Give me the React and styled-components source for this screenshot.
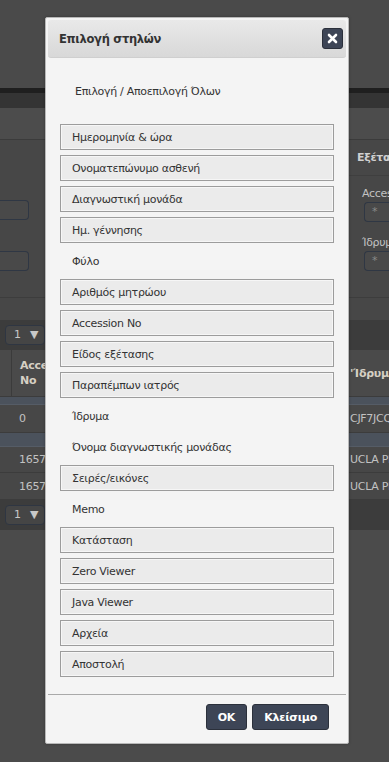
import React from "react";
import styled, { createGlobalStyle } from "styled-components";

const GlobalStyle = createGlobalStyle`
  html, body {
    margin: 0;
    padding: 0;
  }
  body {
    font-family: "DejaVu Sans", Verdana, sans-serif;
    background: #4b4b4b;
  }
`;

const Page = styled.div`
  position: relative;
  width: 389px;
  height: 762px;
  overflow: hidden;
  background: #4b4b4b;
  color: #c2c2c2;
  font-size: 11px;
  letter-spacing: -0.3px;
`;

const TopArea = styled.div`
  height: 88px;
  background: #4a4a4a;
`;

const Strip = styled.div`
  height: ${p => p.h}px;
  background: ${p => p.bg};
`;

const Toolbar = styled.div`
  height: 31px;
  background: #4c4c4c;
  border-bottom: 1px solid #3b3b3b;
`;

const FormPanel = styled.div`
  display: flex;
  justify-content: space-between;
  height: 157px;
  background: #474747;
  border-bottom: 1px solid #3d3d3d;
`;

const FormLeft = styled.div`
  display: flex;
  flex-direction: column;
  gap: 31px;
  padding-top: 60px;
`;

const FormRight = styled.div`
  width: 40px;
  display: flex;
  flex-direction: column;
  overflow: hidden;
`;

const FieldBox = styled.div`
  width: ${p => p.w}px;
  height: 20px;
  box-sizing: border-box;
  border: 1px solid #2f3744;
  border-radius: ${p => (p.left ? "0 4px 4px 0" : "4px 0 0 4px")};
  ${p => (p.left ? "border-left: none;" : "border-right: none;")}
  background: #494949;
  color: #8a8a8a;
  padding-left: 7px;
  line-height: 18px;
`;

const PanelHead = styled.div`
  height: 35px;
  line-height: 35px;
  padding-left: 8px;
  font-weight: bold;
  color: #d0d0d0;
  white-space: nowrap;
  overflow: hidden;
  border-bottom: 1px solid #3f3f3f;
`;

const FieldLabel = styled.div`
  padding-left: 13px;
  margin-top: ${p => p.mt}px;
  height: 16px;
  line-height: 16px;
  white-space: nowrap;
  overflow: hidden;
`;

const FieldWrap = styled.div`
  padding-left: 15px;
`;

const Pager = styled.div`
  height: 30px;
  display: flex;
  align-items: center;
  padding-left: 5px;
  background: #3c3c3c;
`;

const PageSelect = styled.div`
  width: 40px;
  height: 20px;
  box-sizing: border-box;
  border: 1px solid #2f3642;
  border-radius: 4px;
  background: #454545;
  padding-left: 8px;
  line-height: 18px;
  font-size: 11px;
  color: #c8c8c8;
  word-spacing: 6px;
`;

const Row = styled.div`
  display: grid;
  grid-template-columns: 11px 334px 1fr;
  height: ${p => p.h}px;
  background: ${p => (p.band ? "#4b525c" : p.head ? "#4a4a4a" : "#474747")};
  border-bottom: 1px solid ${p => (p.band ? "#555c66" : "#3c3c3c")};
  box-sizing: border-box;
  white-space: nowrap;
  overflow: hidden;
`;

const Cell = styled.div`
  display: flex;
  align-items: center;
  padding-left: ${p => (p.right ? 5 : 8)}px;
  border-left: ${p => (p.line ? "1px solid #3b3b3b" : "none")};
  font-weight: ${p => (p.bold ? "bold" : "normal")};
  color: ${p => (p.bold ? "#d6d0c4" : "#c2c2c2")};
  line-height: 15px;
  overflow: hidden;
`;

const Dialog = styled.div`
  position: absolute;
  left: 45px;
  top: 17px;
  width: 304px;
  box-sizing: border-box;
  background: #f4f4f4;
  border: 1px solid #b8b8b8;
  border-radius: 2px;
  display: flex;
  flex-direction: column;
  padding: 2px 2px 13px;
  color: #333;
  box-shadow: 0 0 3px rgba(0, 0, 0, 0.3);
`;

const TitleBar = styled.div`
  height: 38px;
  display: flex;
  align-items: center;
  justify-content: space-between;
  padding: 0 3px 0 11px;
  border-radius: 3px;
  background: linear-gradient(#e9e9e9, #d8d8d8);
  border-bottom: 1px solid #cfcfcf;
  box-sizing: border-box;
`;

const Title = styled.span`
  font-size: 11.5px;
  font-weight: bold;
  color: #333;
`;

const CloseButton = styled.button`
  width: 21px;
  height: 21px;
  padding: 0;
  display: flex;
  align-items: center;
  justify-content: center;
  background: #3d4556;
  border: 1px solid #2b303b;
  border-radius: 3px;
  cursor: pointer;
`;

const Body = styled.div`
  padding: 0 12px;
`;

const SelectAll = styled.div`
  height: 18px;
  line-height: 18px;
  margin: 25px 0 23px;
  padding-left: 15px;
  font-size: 11px;
  color: #333;
`;

const ColumnList = styled.div`
  display: flex;
  flex-direction: column;
  gap: 5px;
`;

const ColumnItem = styled.div`
  height: 26px;
  box-sizing: border-box;
  display: flex;
  align-items: center;
  padding-left: 11px;
  font-size: 11px;
  color: #333;
  border: 1px solid ${p => (p.active ? "#9c9c9c" : "transparent")};
  background: ${p => (p.active ? "#ebebeb" : "transparent")};
  box-shadow: ${p => (p.active ? "inset 0 0 0 1px #f6f6f6" : "none")};
  white-space: nowrap;
`;

const Divider = styled.div`
  height: 1px;
  background: #a9a9a9;
  margin: 17px 0 0;
`;

const Footer = styled.div`
  display: flex;
  justify-content: flex-end;
  gap: 5px;
  padding: 9px 17px 0 0;
`;

const ActionButton = styled.button`
  height: 26px;
  padding: 0 11px;
  background: #3d4556;
  border: 1px solid #2b303b;
  border-radius: 3px;
  color: #fff;
  font-family: "DejaVu Sans", Verdana, sans-serif;
  font-size: 11px;
  font-weight: bold;
  letter-spacing: -0.2px;
  cursor: pointer;
`;

const columns = [
  { label: "Ημερομηνία & ώρα", active: true },
  { label: "Ονοματεπώνυμο ασθενή", active: true },
  { label: "Διαγνωστική μονάδα", active: true },
  { label: "Ημ. γέννησης", active: true },
  { label: "Φύλο", active: false },
  { label: "Αριθμός μητρώου", active: true },
  { label: "Accession No", active: true },
  { label: "Είδος εξέτασης", active: true },
  { label: "Παραπέμπων ιατρός", active: true },
  { label: "Ίδρυμα", active: false },
  { label: "Όνομα διαγνωστικής μονάδας", active: false },
  { label: "Σειρές/εικόνες", active: true },
  { label: "Memo", active: false },
  { label: "Κατάσταση", active: true },
  { label: "Zero Viewer", active: true },
  { label: "Java Viewer", active: true },
  { label: "Αρχεία", active: true },
  { label: "Αποστολή", active: true }
];

function CloseIcon() {
  return (
    <svg width="11" height="11" viewBox="0 0 11 11">
      <path
        d="M2 2 L9 9 M9 2 L2 9"
        stroke="#fff"
        strokeWidth="2.6"
        strokeLinecap="round"
      />
    </svg>
  );
}

function BackgroundPage() {
  return (
    <>
      <TopArea />
      <Strip h={5} bg="#1f1f1f" />
      <Strip h={15} bg="#343434" />
      <Toolbar />
      <FormPanel>
        <FormLeft>
          <FieldBox left w={29} />
          <FieldBox left w={29} />
        </FormLeft>
        <FormRight>
          <PanelHead>Εξέτασεις</PanelHead>
          <FieldLabel mt={10}>Accession</FieldLabel>
          <FieldWrap>
            <FieldBox w={30}>*</FieldBox>
          </FieldWrap>
          <FieldLabel mt={13}>Ίδρυμα</FieldLabel>
          <FieldWrap>
            <FieldBox w={30}>*</FieldBox>
          </FieldWrap>
        </FormRight>
      </FormPanel>
      <Strip h={22} bg="#474747" />
      <Pager>
        <PageSelect>1 ▼</PageSelect>
      </Pager>
      <Row head h={47}>
        <Cell />
        <Cell line bold>
          Acce
          <br />
          No
        </Cell>
        <Cell right bold>
          'Ίδρυμα
        </Cell>
      </Row>
      <Row band h={8} />
      <Row h={28}>
        <Cell />
        <Cell>0</Cell>
        <Cell right>CJF7JCQ</Cell>
      </Row>
      <Row band h={14} />
      <Row h={26}>
        <Cell />
        <Cell>16572</Cell>
        <Cell right>UCLA PE</Cell>
      </Row>
      <Row h={27}>
        <Cell />
        <Cell>16572</Cell>
        <Cell right>UCLA PE</Cell>
      </Row>
      <Pager>
        <PageSelect>1 ▼</PageSelect>
      </Pager>
    </>
  );
}

export default function App() {
  return (
    <Page>
      <GlobalStyle />
      <BackgroundPage />
      <Dialog>
        <TitleBar>
          <Title>Επιλογή στηλών</Title>
          <CloseButton aria-label="close">
            <CloseIcon />
          </CloseButton>
        </TitleBar>
        <Body>
          <SelectAll>Επιλογή / Αποεπιλογή Όλων</SelectAll>
          <ColumnList>
            {columns.map(col => (
              <ColumnItem key={col.label} active={col.active}>
                {col.label}
              </ColumnItem>
            ))}
          </ColumnList>
        </Body>
        <Divider />
        <Footer>
          <ActionButton>OK</ActionButton>
          <ActionButton>Κλείσιμο</ActionButton>
        </Footer>
      </Dialog>
    </Page>
  );
}
